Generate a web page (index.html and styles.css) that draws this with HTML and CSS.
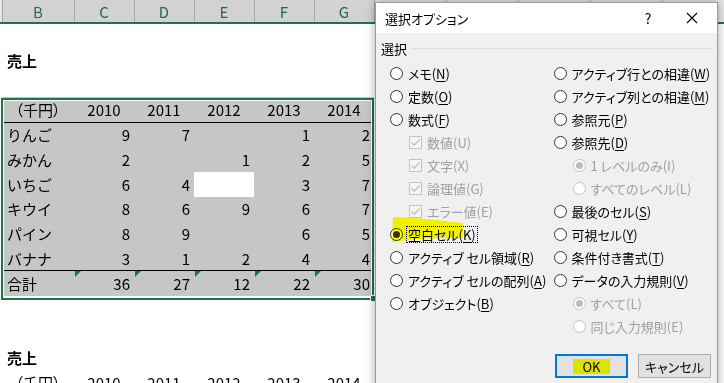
FILE: index.html
```html
<!DOCTYPE html>
<html lang="ja">
<head>
  <meta charset="UTF-8">
  <title>選択オプション</title>
  <link rel="stylesheet" href="styles.css">
</head>
<body>
  <div class="sheet">
    <table class="grid">
      <colgroup>
        <col class="c-edge"><col class="c-wide"><col class="c-num"><col class="c-num"><col class="c-num"><col class="c-num"><col class="c-num"><col class="c-wide"><col class="c-wide"><col class="c-wide"><col class="c-wide"><col class="c-wide">
      </colgroup>
      <thead>
        <tr>
          <th class="edge"></th>
          <th class="hsel">B</th><th class="hsel">C</th><th class="hsel">D</th><th class="hsel">E</th><th class="hsel">F</th><th class="hsel">G</th>
          <th></th><th></th><th></th><th></th><th></th>
        </tr>
      </thead>
      <tbody>
        <tr><td></td><td></td><td></td><td></td><td></td><td></td><td></td><td></td><td></td><td></td><td></td><td></td></tr>
        <tr><td></td><td class="title">売上</td><td></td><td></td><td></td><td></td><td></td><td></td><td></td><td></td><td></td><td></td></tr>
        <tr><td></td><td></td><td></td><td></td><td></td><td></td><td></td><td></td><td></td><td></td><td></td><td></td></tr>
        <tr class="head-row">
          <td></td><td class="sel ctr unit">（千円）</td><td class="sel ctr">2010</td><td class="sel ctr">2011</td><td class="sel ctr">2012</td><td class="sel ctr">2013</td><td class="sel ctr">2014</td><td></td><td></td><td></td><td></td><td></td>
        </tr>
        <tr><td></td><td class="sel">りんご</td><td class="sel num">9</td><td class="sel num">7</td><td class="sel num"></td><td class="sel num">1</td><td class="sel num">2</td><td></td><td></td><td></td><td></td><td></td></tr>
        <tr><td></td><td class="sel">みかん</td><td class="sel num">2</td><td class="sel num"></td><td class="sel num">1</td><td class="sel num">2</td><td class="sel num">5</td><td></td><td></td><td></td><td></td><td></td></tr>
        <tr><td></td><td class="sel">いちご</td><td class="sel num">6</td><td class="sel num">4</td><td class="active"></td><td class="sel num">3</td><td class="sel num">7</td><td></td><td></td><td></td><td></td><td></td></tr>
        <tr><td></td><td class="sel">キウイ</td><td class="sel num">8</td><td class="sel num">6</td><td class="sel num">9</td><td class="sel num">6</td><td class="sel num">7</td><td></td><td></td><td></td><td></td><td></td></tr>
        <tr><td></td><td class="sel">パイン</td><td class="sel num">8</td><td class="sel num">9</td><td class="sel num"></td><td class="sel num">6</td><td class="sel num">5</td><td></td><td></td><td></td><td></td><td></td></tr>
        <tr class="pre-total"><td></td><td class="sel">バナナ</td><td class="sel num">3</td><td class="sel num">1</td><td class="sel num">2</td><td class="sel num">4</td><td class="sel num">4</td><td></td><td></td><td></td><td></td><td></td></tr>
        <tr><td></td><td class="sel">合計</td><td class="sel num flag">36</td><td class="sel num flag">27</td><td class="sel num flag">12</td><td class="sel num flag">22</td><td class="sel num flag">30</td><td></td><td></td><td></td><td></td><td></td></tr>
        <tr><td></td><td></td><td></td><td></td><td></td><td></td><td></td><td></td><td></td><td></td><td></td><td></td></tr>
        <tr><td></td><td></td><td></td><td></td><td></td><td></td><td></td><td></td><td></td><td></td><td></td><td></td></tr>
        <tr><td></td><td class="title">売上</td><td></td><td></td><td></td><td></td><td></td><td></td><td></td><td></td><td></td><td></td></tr>
        <tr><td></td><td class="ctr unit">（千円）</td><td class="ctr">2010</td><td class="ctr">2011</td><td class="ctr">2012</td><td class="ctr">2013</td><td class="ctr">2014</td><td></td><td></td><td></td><td></td><td></td></tr>
      </tbody>
    </table>
    <div class="sel-box"></div>
    <div class="fill-handle"></div>
  </div>

  <div class="dialog">
    <div class="dlg-title">
      <span class="dlg-name">選択オプション</span>
      <span class="dlg-help">?</span>
      <span class="dlg-close">
        <svg width="12" height="12" viewBox="0 0 12 12"><path d="M1 1 L11 11 M11 1 L1 11" stroke="#000" stroke-width="1.1" fill="none"/></svg>
      </span>
    </div>
    <div class="dlg-body">
      <div class="group-label"><span>選択</span><i class="rule"></i></div>
      <div class="options">
        <div class="opt-col">
          <div class="opt"><span class="radio"></span>メモ(<u>N</u>)</div>
          <div class="opt"><span class="radio"></span>定数(<u>O</u>)</div>
          <div class="opt"><span class="radio"></span>数式(<u>F</u>)</div>
          <div class="opt sub off"><span class="check"><svg width="11" height="11" viewBox="0 0 11 11"><path d="M1.5 5.5 L4.2 8.3 L9.5 2.5" stroke="#c2c2c2" stroke-width="1.3" fill="none"/></svg></span>数値(U)</div>
          <div class="opt sub off"><span class="check"><svg width="11" height="11" viewBox="0 0 11 11"><path d="M1.5 5.5 L4.2 8.3 L9.5 2.5" stroke="#c2c2c2" stroke-width="1.3" fill="none"/></svg></span>文字(X)</div>
          <div class="opt sub off"><span class="check"><svg width="11" height="11" viewBox="0 0 11 11"><path d="M1.5 5.5 L4.2 8.3 L9.5 2.5" stroke="#c2c2c2" stroke-width="1.3" fill="none"/></svg></span>論理値(G)</div>
          <div class="opt sub off"><span class="check"><svg width="11" height="11" viewBox="0 0 11 11"><path d="M1.5 5.5 L4.2 8.3 L9.5 2.5" stroke="#c2c2c2" stroke-width="1.3" fill="none"/></svg></span>エラー値(E)</div>
          <div class="opt marked">
            <span class="radio on"></span><span class="focus">空白セル(<u>K</u>)</span>
            <svg class="marker" width="72" height="26" viewBox="0 0 72 26"><polygon points="1,0 22,1 45,3 71,6 71,21 50,21 24,22 0,25" fill="#ffff00"/></svg>
          </div>
          <div class="opt"><span class="radio"></span>アクティブ セル領域(<u>R</u>)</div>
          <div class="opt"><span class="radio"></span>アクティブ セルの配列(<u>A</u>)</div>
          <div class="opt"><span class="radio"></span>オブジェクト(<u>B</u>)</div>
        </div>
        <div class="opt-col">
          <div class="opt"><span class="radio"></span>アクティブ行との相違(<u>W</u>)</div>
          <div class="opt"><span class="radio"></span>アクティブ列との相違(<u>M</u>)</div>
          <div class="opt"><span class="radio"></span>参照元(<u>P</u>)</div>
          <div class="opt"><span class="radio"></span>参照先(<u>D</u>)</div>
          <div class="opt sub off"><span class="radio on"></span>1 レベルのみ(I)</div>
          <div class="opt sub off"><span class="radio"></span>すべてのレベル(L)</div>
          <div class="opt"><span class="radio"></span>最後のセル(<u>S</u>)</div>
          <div class="opt"><span class="radio"></span>可視セル(<u>Y</u>)</div>
          <div class="opt"><span class="radio"></span>条件付き書式(<u>T</u>)</div>
          <div class="opt"><span class="radio"></span>データの入力規則(<u>V</u>)</div>
          <div class="opt sub off"><span class="radio on"></span>すべて(L)</div>
          <div class="opt sub off"><span class="radio"></span>同じ入力規則(E)</div>
        </div>
      </div>
      <div class="buttons">
        <button class="btn btn-ok"><span class="ok-mark">OK</span></button>
        <button class="btn">キャンセル</button>
      </div>
    </div>
  </div>
</body>
</html>
```

FILE: styles.css
```css
* {
  margin: 0;
  padding: 0;
  box-sizing: border-box;
}

body {
  width: 724px;
  height: 383px;
  overflow: hidden;
  background: #ffffff;
  position: relative;
}

/* spreadsheet */

.sheet {
  position: relative;
  font-family: "Noto Sans CJK JP", sans-serif;
  font-size: 15px;
  color: #000;
}

.grid {
  border-collapse: collapse;
  table-layout: fixed;
  width: 734px;
}

.c-edge { width: 2px; }
.c-wide { width: 72px; }
.c-num { width: 60px; }

.grid th {
  height: 23px;
  background: #e6e6e6;
  border-right: 1px solid #ababab;
  border-bottom: 2px solid #217346;
  font-weight: normal;
  font-size: 15px;
  line-height: 15px;
  color: #444;
}

.grid th.hsel {
  background: #d2d2d2;
  color: #1e6a50;
}

.grid td {
  height: 24.8px;
  padding: 0 4px 0 5px;
  line-height: 15px;
  white-space: nowrap;
  overflow: hidden;
}

.grid td.title {
  font-weight: bold;
}

.grid td.sel {
  background: #c6c6c6;
}

.grid td.active {
  background: #ffffff;
}

.grid td.ctr {
  text-align: center;
  padding: 0;
}

.grid td.unit {
  font-feature-settings: "palt";
}

.grid td.num {
  text-align: right;
}

.head-row td.sel {
  border-bottom: 1px solid #000;
}

.pre-total td.sel {
  border-bottom: 1px solid #000;
}

.grid td.flag {
  position: relative;
}

.grid td.flag::before {
  content: "";
  position: absolute;
  left: 1px;
  top: 0;
  border-top: 6px solid #217346;
  border-right: 6px solid transparent;
}

.sel-box {
  position: absolute;
  left: 1px;
  top: 98px;
  width: 373px;
  height: 202px;
  border: 2px solid #217346;
  box-shadow: inset 0 0 0 1px #ffffff;
}

.fill-handle {
  position: absolute;
  left: 370px;
  top: 295px;
  width: 7px;
  height: 7px;
  background: #217346;
  border: 1px solid #ffffff;
}

/* dialog */

.dialog {
  position: absolute;
  left: 375px;
  top: 2px;
  width: 343px;
  height: 400px;
  background: #f0f0f0;
  border: 1px solid #9a9a9a;
  box-shadow: 0 0 9px rgba(0, 0, 0, 0.35);
  font-family: "Noto Sans CJK JP", sans-serif;
  font-size: 13px;
  color: #000;
  font-feature-settings: "palt";
}

.dlg-title {
  height: 30px;
  background: #ffffff;
  display: flex;
  align-items: center;
  padding-left: 9px;
}

.dlg-name {
  flex: 1;
  font-size: 13px;
}

.dlg-help {
  width: 20px;
  text-align: center;
  font-size: 14px;
  margin-right: 24px;
}

.dlg-close {
  width: 20px;
  display: flex;
  justify-content: center;
  margin-right: 15px;
}

.dlg-body {
  padding: 7px 0 0 5px;
}

.group-label {
  display: flex;
  align-items: center;
  height: 16px;
  padding-right: 4px;
}

.group-label .rule {
  flex: 1;
  height: 1px;
  background: #dcdcdc;
  margin-left: 5px;
}

.options {
  display: flex;
  margin-top: 6px;
  padding-left: 9px;
}

.opt-col {
  width: 165px;
}

.opt {
  height: 23px;
  display: flex;
  align-items: center;
  white-space: nowrap;
  position: relative;
}

.opt u {
  text-decoration-thickness: 1px;
  text-underline-offset: 2px;
}

.opt.sub {
  padding-left: 19px;
}

.opt.off {
  color: #a0a0a0;
}

.radio {
  width: 13px;
  height: 13px;
  border: 1px solid #333333;
  border-radius: 50%;
  background: #ffffff;
  margin-right: 5px;
  flex: none;
  display: flex;
  align-items: center;
  justify-content: center;
}

.radio.on::after {
  content: "";
  width: 7px;
  height: 7px;
  border-radius: 50%;
  background: #333333;
}

.off .radio {
  border-color: #c2c2c2;
}

.off .radio.on::after {
  background: #bcbcbc;
}

.check {
  width: 13px;
  height: 13px;
  border: 1px solid #c2c2c2;
  background: #f5f5f5;
  margin-right: 5px;
  flex: none;
  display: flex;
  align-items: center;
  justify-content: center;
}

.focus {
  border: 1px dotted #000;
  line-height: 15px;
  padding: 0 1px;
  margin-left: -2px;
}

.marker {
  position: absolute;
  left: 2px;
  top: -6px;
  mix-blend-mode: multiply;
}

.buttons {
  display: flex;
  justify-content: flex-end;
  gap: 10px;
  padding-right: 6px;
  margin-top: 16px;
}

.btn {
  width: 73px;
  height: 24px;
  background: #e1e1e1;
  border: 1px solid #adadad;
  font-family: "Noto Sans CJK JP", sans-serif;
  font-size: 13px;
  font-feature-settings: "palt";
  color: #000;
}

.btn-ok {
  border: 2px solid #0078d7;
}

.ok-mark {
  display: inline-block;
  width: 37px;
  height: 15px;
  line-height: 15px;
  background: #e1e100;
}
```
